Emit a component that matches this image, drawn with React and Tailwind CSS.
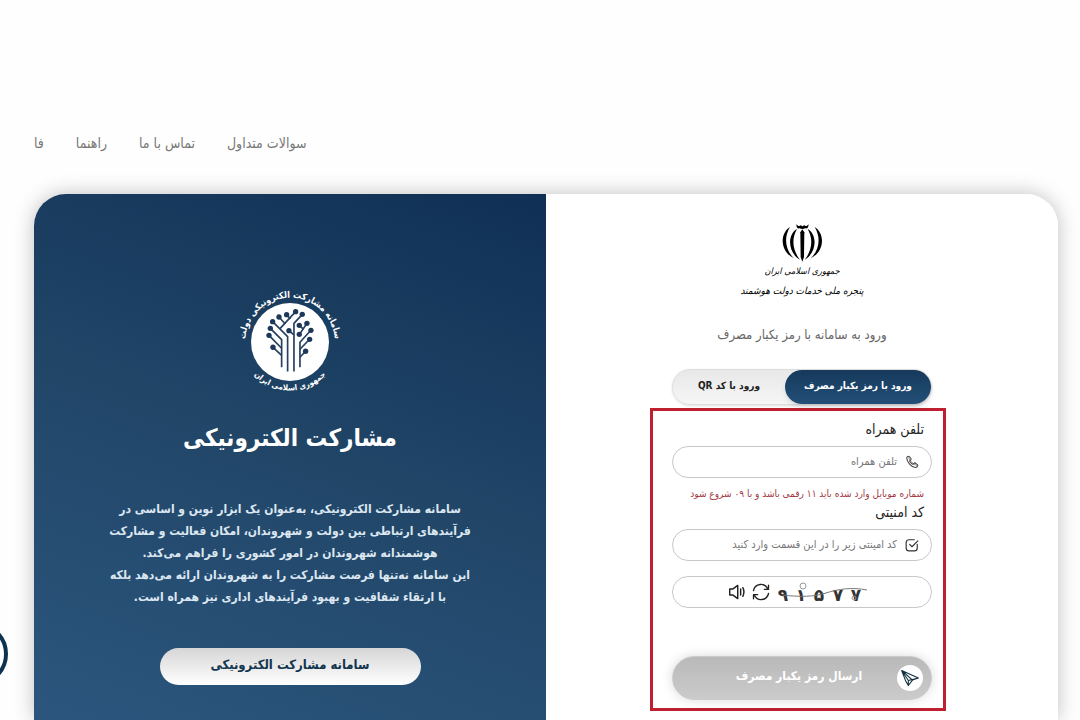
import { useState } from 'react'

const NAV_LINKS = [
  { href: '#faq',     label: 'سوالات متداول' },
  { href: '#contact', label: 'تماس با ما' },
  { href: '#guide',   label: 'راهنما' },
  { href: '#lang',    label: 'فا' },
]

const INTRO_LINES = [
  'سامانه مشارکت الکترونیکی، به‌عنوان یک ابزار نوین و اساسی در',
  'فرآیندهای ارتباطی بین دولت و شهروندان، امکان فعالیت و مشارکت',
  'هوشمندانه شهروندان در امور کشوری را فراهم می‌کند.',
  'این سامانه نه‌تنها فرصت مشارکت را به شهروندان ارائه می‌دهد بلکه',
  'با ارتقاء شفافیت و بهبود فرآیندهای اداری نیز همراه است.',
]

// circuit tree: each branch ends in a node
const BRANCHES = [
  { d: 'M95 196V113L61 79',       x: 61,  y: 79 },
  { d: 'M95 139L57 100',          x: 57,  y: 100 },
  { d: 'M95 160L69 136',          x: 69,  y: 136 },
  { d: 'M113 209V104L68 59',      x: 68,  y: 59 },
  { d: 'M106 66L87 45',           x: 87,  y: 45 },
  { d: 'M121 51L110 38',          x: 110, y: 38 },
  { d: 'M90 80L137 29',           x: 137, y: 29 },
  { d: 'M132 209V64L157 37',      x: 157, y: 37 },
  { d: 'M132 99L117 86',          x: 117, y: 86 },
  { d: 'M150 196V121L183 85',     x: 183, y: 85 },
  { d: 'M150 98L148 97',          x: 148, y: 97 },
  { d: 'M148 98L171 64',          x: 171, y: 64 },
  { d: 'M161 82L148 70',          x: 148, y: 70 },
  { d: 'M150 142L179 112',        x: 179, y: 112 },
  { d: 'M150 166L167 148',        x: 167, y: 148 },
]

function Emblem() {
  return (
    <svg width="40" height="40" viewBox="12 9 120 120" fill="#000" aria-hidden="true">
      <path d="M56 12c3 7 9 8 13 3 2 5 7 5 9 0 4 5 10 4 13-3 2 9-3 15-10 13-4 3-12 3-16 0-7 2-11-4-9-13z" />
      <path d="M73 28l6 9-1 74-5 14-5-14-1-74z" />
      <path d="M36 21C5 40 5 94 48 115 21 90 17 52 36 21zM110 21c31 19 31 73-12 94 27-25 31-63 12-94z" />
      <path d="M57 27C28 42 28 98 66 119 43 91 40 56 57 27zM89 27c29 15 29 71-9 92 23-28 26-63 9-92z" />
    </svg>
  )
}

function PortalLogo() {
  return (
    <svg width="120" height="108" viewBox="-8 0 120 108" role="img" aria-label="سامانه مشارکت الکترونیکی دولت">
      <defs>
        <path id="arcTop" d="M9 70A45 45 0 1 1 95 70" />
        <path id="arcBottom" d="M8 77A49 49 0 0 0 96 77" />
      </defs>
      <circle cx="52" cy="56" r="39" fill="#fff" />
      <g transform="translate(12 16) scale(0.333)">
        <g fill="none" stroke="#24405f" strokeWidth="5">
          {BRANCHES.map(b => <path key={b.d} d={b.d} />)}
        </g>
        <g fill="#1d3858">
          {BRANCHES.map(b => <circle key={b.d} cx={b.x} cy={b.y} r="8" />)}
        </g>
      </g>
      <g fill="#fff" textAnchor="middle" fontFamily="DejaVu Sans Condensed, DejaVu Sans, sans-serif" fontWeight="bold">
        <text fontSize="9"><textPath href="#arcTop" startOffset="50%">سامانه مشارکت الکترونیکی دولت</textPath></text>
        <text fontSize="8"><textPath href="#arcBottom" startOffset="50%">جمهوری اسلامی ایران</textPath></text>
      </g>
    </svg>
  )
}

function PhoneIcon() {
  return (
    <svg width="14" height="14" viewBox="0 0 24 24" fill="none" stroke="#444" strokeWidth="1.800" strokeLinejoin="round" aria-hidden="true">
      <path d="M3 5c0-2 2-3 3.500-3 1 0 4 4.500 4 5.500S8 9.500 8 10.500s4.500 5.500 5.500 5.500 2-2.500 3-2.500 5.500 3 5.500 4-1.500 4-4 4C11 21.500 3 11 3 5z" />
      <path d="M6.500 2C5 6 12 16 21 18" strokeWidth="1" />
    </svg>
  )
}

function CheckIcon() {
  return (
    <svg width="14" height="14" viewBox="0 0 24 24" fill="none" stroke="#333" strokeWidth="2" strokeLinecap="round" strokeLinejoin="round" aria-hidden="true">
      <path d="M21 11v6a5 5 0 0 1-5 5H7a5 5 0 0 1-5-5V8a5 5 0 0 1 5-5h9" />
      <path d="M8 11l4 4L22 5" />
    </svg>
  )
}

function Captcha() {
  return (
    <svg width="92" height="26" viewBox="0 0 92 26" role="img" aria-label="تصویر امنیتی">
      <g fill="#333" fontFamily="DejaVu Sans, sans-serif" fontWeight="bold" fontSize="17" textAnchor="middle">
        <text x="7" y="22">۹</text>
        <text x="25" y="22">۱</text>
        <text x="43" y="22">۵</text>
        <text x="62" y="22">۷</text>
        <text x="80" y="22">۷</text>
      </g>
      <path d="M6 16C24 18 38 18 50 14S76 8 91 11" fill="none" stroke="#777" />
      <circle cx="27" cy="7" r="3" fill="none" stroke="#999" />
      <circle cx="78" cy="19" r="2" fill="none" stroke="#999" />
    </svg>
  )
}

function RefreshIcon() {
  return (
    <svg width="18" height="18" viewBox="0 0 24 24" fill="none" stroke="#222" strokeWidth="1.800" strokeLinecap="round" strokeLinejoin="round" aria-hidden="true">
      <path d="M2 10a10 10 0 0 1 19-2M22 3v5.500h-5.500M22 14a10 10 0 0 1-19 2M2 21v-5.500h5.500" />
    </svg>
  )
}

function SpeakerIcon() {
  return (
    <svg width="18" height="16" viewBox="0 0 24 22" fill="none" stroke="#222" strokeWidth="2" strokeLinecap="round" strokeLinejoin="round" aria-hidden="true">
      <path d="M13 2L6 7H2v8h4l7 5zM17 7v8M20 5c2 4 2 8 0 12" />
    </svg>
  )
}

function PlaneIcon() {
  return (
    <svg width="20" height="20" viewBox="0 0 24 24" fill="none" stroke="#12303f" strokeWidth="1.300" strokeLinejoin="round" aria-hidden="true">
      <path d="M2 3l20 9-7 2.500-5 6.500-3-5zM2 3l8 12 12-3M10 15v6M2 3l13 11.500" />
    </svg>
  )
}

function Field({ id, icon, placeholder, type = 'text' }) {
  return (
    <div className="flex h-8 items-center gap-2 rounded-full border border-[#c8c8c8] bg-white px-3">
      {icon}
      <input id={id} type={type} placeholder={placeholder} dir="rtl" className="min-w-0 flex-1 bg-transparent text-[11px] text-[#444] outline-none placeholder:text-[#777]" />
    </div>
  )
}

function IntroPanel() {
  return (
    <section className="flex flex-1 flex-col items-center bg-linear-[200deg] from-[#0f3054] via-[#214668] to-[#2c567e] pt-[92px] text-center">
      <PortalLogo />
      <h1 className="mt-[26px] text-[24px] leading-9 font-bold text-white">مشارکت الکترونیکی</h1>
      <p className="mt-[42px] text-[12px] leading-[22px] font-bold whitespace-nowrap text-[#dce7f1]">
        {INTRO_LINES.map(line => <span key={line} className="block">{line}</span>)}
      </p>
      <a href="#system" className="mt-10 flex h-[37px] w-[261px] items-center justify-center rounded-full bg-linear-to-b from-[#d6d6d6] to-white pb-1 text-[13px] font-bold text-[#12364f]">
        سامانه مشارکت الکترونیکی
      </a>
    </section>
  )
}

function LoginPanel() {
  const [mode, setMode] = useState('otp')
  const tab = 'rounded-full pb-1 text-[10px] font-bold'
  const on = 'bg-linear-to-b from-[#16395c] to-[#235078] text-white shadow-md'
  const off = 'text-[#222]'

  return (
    <section className="flex flex-1 flex-col items-center bg-white pt-[29px]">
      <Emblem />
      <div className="text-center text-black italic">
        <p className="text-[9px] leading-4">جمهوری اسلامی ایران</p>
        <p className="text-[10px] leading-6">پنجره ملی خدمات دولت هوشمند</p>
      </div>
      <h2 className="mt-[22px] text-[13px] leading-5 text-[#666]">ورود به سامانه با رمز یکبار مصرف</h2>

      <div className="w-[260px]">
        <div className="mt-6 flex h-9 rounded-full border border-[#ddd] bg-linear-to-b from-[#e8e8e8] to-[#f6f6f6] shadow-sm">
          <button type="button" onClick={() => setMode('otp')} className={`${tab} w-[146px] ${mode === 'otp' ? on : off}`}>ورود با رمز یکبار مصرف</button>
          <button type="button" onClick={() => setMode('qr')} className={`${tab} flex-1 ${mode === 'qr' ? on : off}`}>ورود با کد QR</button>
        </div>

        <form className="mt-[3px] -mr-[14px] -ml-[22px] border-3 border-[#bf202f] pt-2 pr-[11px] pb-2 pl-[19px]" onSubmit={e => e.preventDefault()}>
          <label htmlFor="mobile" className="block pr-2 text-[14px] leading-5 text-[#222]">تلفن همراه</label>
          <div className="mt-[7px]">
            <Field id="mobile" type="tel" placeholder="تلفن همراه" icon={<PhoneIcon />} />
          </div>
          <p className="mt-2 pr-2 text-[10px] leading-4 whitespace-nowrap text-[#a33a45]">شماره موبایل وارد شده باید ۱۱ رقمی باشد و با ۰۹ شروع شود</p>
          <label htmlFor="code" className="block pr-2 text-[14px] leading-5 text-[#222]">کد امنیتی</label>
          <div className="mt-[7px]">
            <Field id="code" placeholder="کد امینتی زیر را در این قسمت وارد کنید" icon={<CheckIcon />} />
          </div>
          <div className="mt-[15px] flex h-8 items-center justify-center gap-1.5 rounded-full border border-[#c8c8c8] pr-2">
            <Captcha />
            <button type="button" aria-label="تازه سازی"><RefreshIcon /></button>
            <button type="button" aria-label="پخش صوتی"><SpeakerIcon /></button>
          </div>
          <button type="submit" className="mt-12 flex h-11 w-full items-center rounded-full border border-[#ccc] bg-linear-to-b from-[#b9b9b9] to-[#cbcbcb] pr-2 pl-3 text-[12px] font-bold text-white shadow-[0_0_12px_rgba(0,0,0,0.15)]">
            <span className="flex size-[26px] items-center justify-center rounded-full bg-white"><PlaneIcon /></span>
            <span className="flex-1 pb-1 pl-4 text-center">ارسال رمز یکبار مصرف</span>
          </button>
        </form>
      </div>
    </section>
  )
}

export default function App() {
  return (
    <div dir="rtl" className="relative flex min-h-screen flex-col overflow-hidden bg-[#fefefe] font-['DejaVu_Sans_Condensed','DejaVu_Sans',sans-serif]">
      <nav className="flex justify-end gap-8 px-[34px] pt-[133px] text-[14px] leading-5 text-[#777]">
        {NAV_LINKS.map(link => <a key={link.href} href={link.href}>{link.label}</a>)}
      </nav>
      <main className="mt-[41px] mr-[22px] ml-[34px] flex flex-1 overflow-hidden rounded-t-[32px] shadow-[0_0_20px_rgba(0,0,0,0.25)]">
        <LoginPanel />
        <IntroPanel />
      </main>
      <button type="button" aria-label="دسترسی" className="absolute bottom-[34px] -left-14 size-16 rounded-full border-4 border-[#0c3350] bg-white" />
    </div>
  )
}
